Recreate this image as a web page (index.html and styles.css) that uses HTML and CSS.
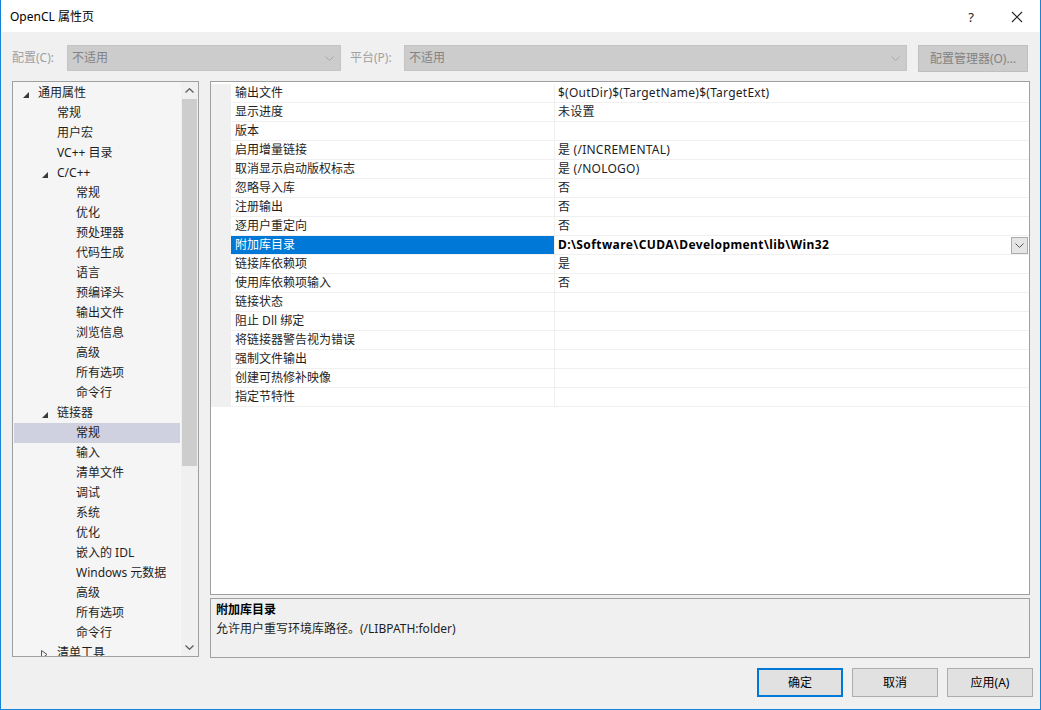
FILE: index.html
```html
<!DOCTYPE html>
<html lang="zh-CN">
<head>
<meta charset="utf-8">
<title>OpenCL 属性页</title>
<link rel="stylesheet" href="styles.css">
</head>
<body>
<div class="window">
  <div class="titlebar">
    <span class="title">OpenCL 属性页</span>
    <span class="help">?</span>
    <span class="close"><svg width="12" height="12" viewBox="0 0 12 12"><path d="M1 1L11 11M11 1L1 11" stroke="#222" stroke-width="1.1" fill="none"/></svg></span>
  </div>

  <div class="configrow">
    <span class="lbl lbl-config">配置(C):</span>
    <div class="combo combo-config"><span>不适用</span><svg class="chev" width="9" height="5" viewBox="0 0 9 5"><path d="M0.5 0.5L4.5 4.5L8.5 0.5" stroke="#a8a8a8" fill="none"/></svg></div>
    <span class="lbl lbl-platform">平台(P):</span>
    <div class="combo combo-platform"><span>不适用</span><svg class="chev" width="9" height="5" viewBox="0 0 9 5"><path d="M0.5 0.5L4.5 4.5L8.5 0.5" stroke="#a8a8a8" fill="none"/></svg></div>
    <div class="cfgbtn">配置管理器(O)...</div>
  </div>

  <div class="main">
    <div class="tree">
      <div class="treelist">
        <div class="node l0"><span class="tog"><i class="tri"></i></span>通用属性</div>
        <div class="node l1"><span class="tog"></span>常规</div>
        <div class="node l1"><span class="tog"></span>用户宏</div>
        <div class="node l1"><span class="tog"></span>VC++ 目录</div>
        <div class="node l1"><span class="tog"><i class="tri"></i></span>C/C++</div>
        <div class="node l2"><span class="tog"></span>常规</div>
        <div class="node l2"><span class="tog"></span>优化</div>
        <div class="node l2"><span class="tog"></span>预处理器</div>
        <div class="node l2"><span class="tog"></span>代码生成</div>
        <div class="node l2"><span class="tog"></span>语言</div>
        <div class="node l2"><span class="tog"></span>预编译头</div>
        <div class="node l2"><span class="tog"></span>输出文件</div>
        <div class="node l2"><span class="tog"></span>浏览信息</div>
        <div class="node l2"><span class="tog"></span>高级</div>
        <div class="node l2"><span class="tog"></span>所有选项</div>
        <div class="node l2"><span class="tog"></span>命令行</div>
        <div class="node l1"><span class="tog"><i class="tri"></i></span>链接器</div>
        <div class="node l2 sel"><span class="tog"></span>常规</div>
        <div class="node l2"><span class="tog"></span>输入</div>
        <div class="node l2"><span class="tog"></span>清单文件</div>
        <div class="node l2"><span class="tog"></span>调试</div>
        <div class="node l2"><span class="tog"></span>系统</div>
        <div class="node l2"><span class="tog"></span>优化</div>
        <div class="node l2"><span class="tog"></span>嵌入的 IDL</div>
        <div class="node l2"><span class="tog"></span>Windows 元数据</div>
        <div class="node l2"><span class="tog"></span>高级</div>
        <div class="node l2"><span class="tog"></span>所有选项</div>
        <div class="node l2"><span class="tog"></span>命令行</div>
        <div class="node l1"><span class="tog"><svg class="tri-c" width="7" height="9" viewBox="0 0 7 9"><path d="M0.5 0.5L6 4.5L0.5 8.5Z" stroke="#555" fill="none"/></svg></span>清单工具</div>
      </div>
      <div class="vscroll">
        <div class="arrow"><svg width="9" height="5" viewBox="0 0 9 5"><path d="M0.5 4.5L4.5 0.7L8.5 4.5" stroke="#606060" stroke-width="1.3" fill="none"/></svg></div>
        <div class="track"><div class="thumb"></div></div>
        <div class="arrow"><svg width="9" height="5" viewBox="0 0 9 5"><path d="M0.5 0.5L4.5 4.3L8.5 0.5" stroke="#606060" stroke-width="1.3" fill="none"/></svg></div>
      </div>
    </div>

    <div class="rightcol">
      <div class="grid">
        <div class="row"><span class="gut"></span><span class="name">输出文件</span><span class="val">$(OutDir)$(TargetName)$(TargetExt)</span></div>
        <div class="row"><span class="gut"></span><span class="name">显示进度</span><span class="val">未设置</span></div>
        <div class="row"><span class="gut"></span><span class="name">版本</span><span class="val"></span></div>
        <div class="row"><span class="gut"></span><span class="name">启用增量链接</span><span class="val">是 (/INCREMENTAL)</span></div>
        <div class="row"><span class="gut"></span><span class="name">取消显示启动版权标志</span><span class="val">是 (/NOLOGO)</span></div>
        <div class="row"><span class="gut"></span><span class="name">忽略导入库</span><span class="val">否</span></div>
        <div class="row"><span class="gut"></span><span class="name">注册输出</span><span class="val">否</span></div>
        <div class="row"><span class="gut"></span><span class="name">逐用户重定向</span><span class="val">否</span></div>
        <div class="row selrow"><span class="gut"></span><span class="name">附加库目录</span><span class="val bold">D:\Software\CUDA\Development\lib\Win32<span class="ddbtn"><svg width="9" height="5" viewBox="0 0 9 5"><path d="M0.5 0.5L4.5 4.5L8.5 0.5" stroke="#555" fill="none"/></svg></span></span></div>
        <div class="row"><span class="gut"></span><span class="name">链接库依赖项</span><span class="val">是</span></div>
        <div class="row"><span class="gut"></span><span class="name">使用库依赖项输入</span><span class="val">否</span></div>
        <div class="row"><span class="gut"></span><span class="name">链接状态</span><span class="val"></span></div>
        <div class="row"><span class="gut"></span><span class="name">阻止 Dll 绑定</span><span class="val"></span></div>
        <div class="row"><span class="gut"></span><span class="name">将链接器警告视为错误</span><span class="val"></span></div>
        <div class="row"><span class="gut"></span><span class="name">强制文件输出</span><span class="val"></span></div>
        <div class="row"><span class="gut"></span><span class="name">创建可热修补映像</span><span class="val"></span></div>
        <div class="row"><span class="gut"></span><span class="name">指定节特性</span><span class="val"></span></div>
      </div>
      <div class="desc">
        <div class="desc-title">附加库目录</div>
        <div class="desc-text">允许用户重写环境库路径。(/LIBPATH:folder)</div>
      </div>
    </div>
  </div>

  <div class="buttons">
    <div class="btn default">确定</div>
    <div class="btn">取消</div>
    <div class="btn">应用(A)</div>
  </div>
</div>
</body>
</html>
```

FILE: styles.css
```css
html, body {
  margin: 0;
  padding: 0;
}

body {
  width: 1041px;
  height: 710px;
  font-family: "Noto Sans", "Noto Sans CJK SC", sans-serif;
  font-size: 12px;
  color: #000;
  overflow: hidden;
}

.window {
  box-sizing: border-box;
  width: 1041px;
  height: 710px;
  background: #f0f0f0;
  border: 1px solid #1883d7;
  border-top: none;
  display: flex;
  flex-direction: column;
}

/* Title bar */
.titlebar {
  height: 32px;
  background: #fff;
  display: flex;
  align-items: center;
  flex-shrink: 0;
  padding-top: 1px;
  box-sizing: border-box;
}

.title {
  padding-left: 9px;
  flex: 1;
  font-size: 12px;
  line-height: 16px;
}

.help {
  width: 14px;
  text-align: center;
  font-size: 13px;
  color: #222;
  margin-right: 33px;
}

.close {
  display: flex;
  align-items: center;
  margin-right: 17px;
}

/* Config row */
.configrow {
  height: 49px;
  box-sizing: border-box;
  padding: 13px 0 0 11px;
  display: flex;
  align-items: flex-start;
  flex-shrink: 0;
  color: #a0a0a0;
}

.lbl {
  height: 26px;
  line-height: 26px;
}

.lbl-config { width: 55px; }
.lbl-platform { width: 54px; margin-left: 9px; }

.combo {
  box-sizing: border-box;
  height: 26px;
  background: #cccccc;
  border: 1px solid #c4c4c4;
  color: #838383;
  display: flex;
  align-items: center;
  justify-content: space-between;
  padding: 0 6px 0 4px;
  line-height: 24px;
}

.combo-config { width: 274px; }
.combo-platform { width: 503px; }

.cfgbtn {
  box-sizing: border-box;
  width: 110px;
  height: 27px;
  margin-left: 11px;
  background: #cccccc;
  border: 1px solid #bfbfbf;
  color: #838383;
  text-align: center;
  line-height: 25px;
}

/* Main */
.main {
  height: 577px;
  display: flex;
  margin-left: 11px;
  gap: 11px;
  flex-shrink: 0;
}

.tree {
  box-sizing: border-box;
  width: 187px;
  height: 576px;
  border: 1px solid #a0a0a0;
  background: #f5f5f5;
  display: flex;
}

.treelist {
  flex: 1;
  overflow: hidden;
  padding: 1px 1px 0 0;
}

.node {
  height: 20px;
  line-height: 20px;
  display: flex;
  align-items: center;
  white-space: nowrap;
  color: #1e1e1e;
}

.node.l0 { padding-left: 6px; }
.node.l1 { padding-left: 25px; }
.node.l2 { padding-left: 44px; }

.node.sel {
  background: #cfd1e0;
  margin-left: 1px;
  padding-left: 43px;
}

.tog {
  width: 19px;
  height: 20px;
  display: flex;
  align-items: center;
  flex-shrink: 0;
}

.tri {
  display: block;
  width: 0;
  height: 0;
  margin-left: 4px;
  margin-top: 3px;
  border-left: 6px solid transparent;
  border-bottom: 6px solid #3a3a3a;
}

.tri-c {
  margin-left: 3px;
  margin-top: 2px;
}

.vscroll {
  width: 17px;
  display: flex;
  flex-direction: column;
  background: #f0f0f0;
  flex-shrink: 0;
}

.arrow {
  height: 17px;
  display: flex;
  align-items: center;
  justify-content: center;
  flex-shrink: 0;
}

.track {
  flex: 1;
  padding: 0 1px;
}

.thumb {
  height: 367px;
  background: #cdcdcd;
}

/* Right column */
.rightcol {
  width: 820px;
  display: flex;
  flex-direction: column;
  gap: 3px;
}

.grid {
  box-sizing: border-box;
  height: 514px;
  border: 1px solid #a0a0a0;
  background: #fff;
  padding-top: 2px;
}

.row {
  display: flex;
  height: 19px;
  line-height: 18px;
}

.gut {
  width: 20px;
  background: #f0f0f0;
  flex-shrink: 0;
}

.name {
  box-sizing: border-box;
  width: 324px;
  padding-left: 4px;
  border-bottom: 1px solid #f0f0f0;
  border-right: 1px solid #f0f0f0;
  color: #1e1e1e;
  white-space: nowrap;
}

.val {
  flex: 1;
  padding-left: 3px;
  border-bottom: 1px solid #f0f0f0;
  white-space: nowrap;
  display: flex;
  align-items: center;
  color: #1e1e1e;
  letter-spacing: 0.25px;
}

.selrow .name {
  background: #0078d7;
  color: #fff;
}

.val.bold {
  font-weight: bold;
  color: #000;
  letter-spacing: 0.4px;
}

.ddbtn {
  box-sizing: border-box;
  width: 17px;
  height: 17px;
  margin-left: auto;
  margin-right: 1px;
  background: #e5e5e5;
  border: 1px solid #acacac;
  display: flex;
  align-items: center;
  justify-content: center;
}

.desc {
  box-sizing: border-box;
  height: 60px;
  border: 1px solid #a0a0a0;
  background: #f0f0f0;
  padding: 1px 5px;
  line-height: 19px;
  color: #1e1e1e;
}

.desc-title {
  font-weight: bold;
  color: #000;
}

/* Buttons */
.buttons {
  display: flex;
  justify-content: flex-end;
  gap: 9px;
  padding: 10px 7px 0 0;
}

.btn {
  box-sizing: border-box;
  width: 86px;
  height: 29px;
  background: #e1e1e1;
  border: 1px solid #adadad;
  text-align: center;
  line-height: 27px;
  color: #000;
}

.btn.default {
  border: 2px solid #0078d7;
  line-height: 25px;
}
```
